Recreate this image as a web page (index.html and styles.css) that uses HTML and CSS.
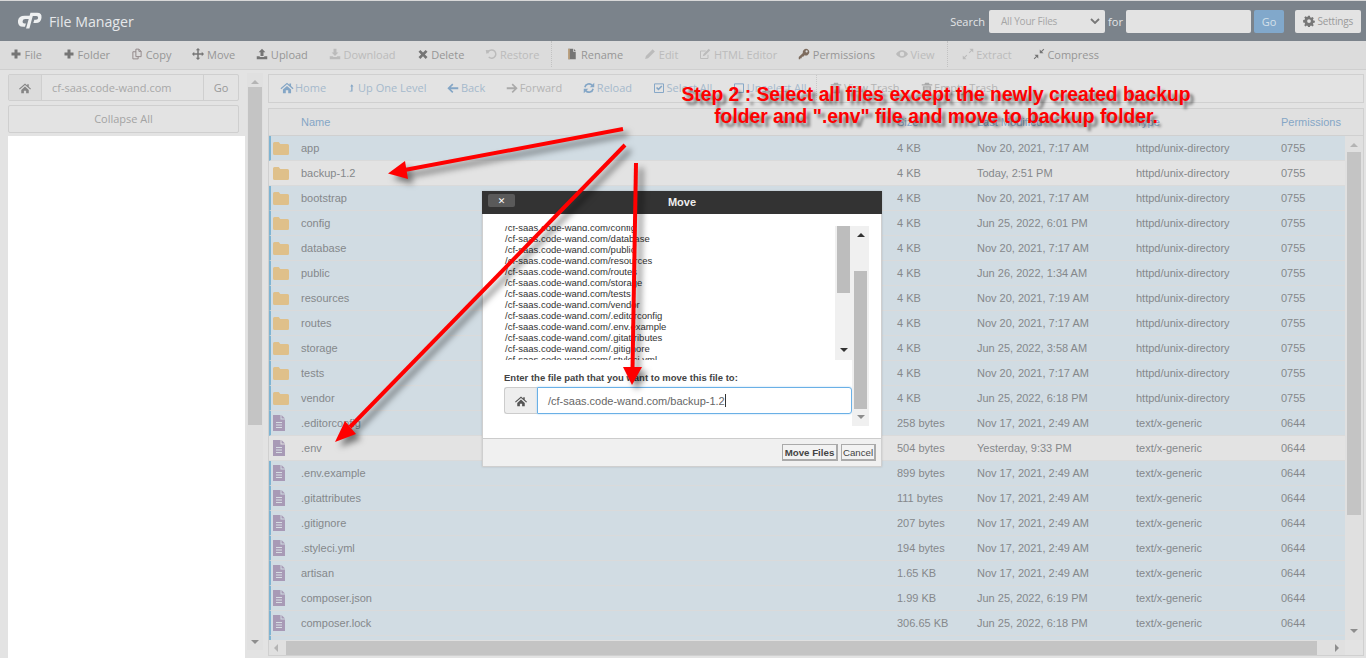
FILE: index.html
```html
<!DOCTYPE html>
<html lang="en">
<head>
<meta charset="utf-8">
<title>File Manager</title>
<link rel="stylesheet" href="styles.css">
</head>
<body>
<svg class="sprite" xmlns="http://www.w3.org/2000/svg">
  <symbol id="i-plus" viewBox="0 0 16 16"><path d="M6 2h4v4h4v4h-4v4H6v-4H2V6h4z"/></symbol>
  <symbol id="i-copy" viewBox="0 0 16 16"><path fill="none" stroke="currentColor" stroke-width="1.3" d="M6.5 1.5h4l3 3v7h-7zM10.5 1.5v3h3M6.5 5h-4v9.5h7v-3"/></symbol>
  <symbol id="i-move" viewBox="0 0 16 16"><path d="M8 0l3 3H9v4h4V5l3 3-3 3V9H9v4h2l-3 3-3-3h2V9H3v2L0 8l3-3v2h4V3H5z"/></symbol>
  <symbol id="i-upload" viewBox="0 0 16 16"><path d="M8 1l4.500 4.500H10v5H6v-5H3.500zM1 11h4v1h6v-1h4v4H1z"/></symbol>
  <symbol id="i-download" viewBox="0 0 16 16"><path d="M6 1h4v5h2.500L8 10.500 3.500 6H6zM1 11h4l1 1h4l1-1h4v4H1z"/></symbol>
  <symbol id="i-x" viewBox="0 0 16 16"><path d="M4.500 2.500L8 6l3.500-3.500 2.500 2.500L10.500 8.500 14 12l-2.500 2.500L8 11l-3.500 3.500L2 12l3.500-3.500L2 5z"/></symbol>
  <symbol id="i-undo" viewBox="0 0 16 16"><path fill="none" stroke="currentColor" stroke-width="2" d="M3.500 7a5.500 5.500 0 1 1 1.500 5"/><path d="M1 2.500l6 .5-5 5z"/></symbol>
  <symbol id="i-rename" viewBox="0 0 16 16"><path d="M3 1h6.500v4H13v10H3z"/><path fill="#c9a77c" d="M3 1h2v14H3z"/><path d="M10.500 1L13 4h-2.500z"/></symbol>
  <symbol id="i-pencil" viewBox="0 0 16 16"><path d="M11.500 1.500l3 3-9 9-4 1 1-4z"/></symbol>
  <symbol id="i-edit" viewBox="0 0 16 16"><path fill="none" stroke="currentColor" stroke-width="1.300" d="M12 9v5H2V4h7"/><path d="M13 1l2 2-7 7-3 1 1-3z"/></symbol>
  <symbol id="i-key" viewBox="0 0 16 16"><path d="M10.500 1a4.500 4.500 0 1 1-1.800 8.600L7 11.500H5V13.500H3V15H1v-3l5.500-5.500A4.500 4.500 0 0 1 10.500 1zM11.500 3a1.500 1.500 0 1 0 0 3 1.500 1.500 0 0 0 0-3z" fill-rule="evenodd"/></symbol>
  <symbol id="i-eye" viewBox="0 0 16 16"><path fill-rule="evenodd" d="M8 3c3.500 0 6.300 2.400 8 5-1.700 2.600-4.500 5-8 5s-6.300-2.400-8-5c1.700-2.600 4.500-5 8-5zM8 5a3 3 0 1 0 0 6 3 3 0 0 0 0-6z"/></symbol>
  <symbol id="i-expand" viewBox="0 0 16 16"><path d="M10 1h5v5l-2-2-3 3-1-1 3-3zM6 15H1v-5l2 2 3-3 1 1-3 3z"/></symbol>
  <symbol id="i-compress" viewBox="0 0 16 16"><path d="M9 7V2l2 2 3-3 1 1-3 3 2 2zM7 9v5l-2-2-3 3-1-1 3-3-2-2z"/></symbol>
  <symbol id="i-home" viewBox="0 0 16 16"><path d="M8 2l3 2.500V3h2v3.200L16 9l-1 1-7-6-7 6-1-1zM3 10.500L8 6l5 4.500V15H9.500v-3.500h-3V15H3z"/></symbol>
  <symbol id="i-up" viewBox="0 0 16 16"><path d="M9.500 0.500L13 5h-2v10H5v-1.500h3.500V5h-2z"/></symbol>
  <symbol id="i-back" viewBox="0 0 16 16"><path d="M7 2l1.500 1.500L5 7h10v2.500H5l3.500 3.500L7 14.500 0.500 8.200z"/></symbol>
  <symbol id="i-forward" viewBox="0 0 16 16"><path d="M9 2L7.500 3.500 11 7H1v2.500h10L7.500 13 9 14.500l6.500-6.300z"/></symbol>
  <symbol id="i-reload" viewBox="0 0 16 16"><path fill="none" stroke="currentColor" stroke-width="2.200" d="M2.500 7a5.600 5.600 0 0 1 9.800-2.500M13.500 9a5.600 5.600 0 0 1-9.800 2.500"/><path d="M15 1v6H9zM1 15V9h6z"/></symbol>
  <symbol id="i-check" viewBox="0 0 16 16"><path fill="none" stroke="currentColor" stroke-width="1.300" d="M2 2.500h12v11.500H2z"/><path d="M4 8l1.500-1.500L7.300 8.300 11 4.500 12.500 6 7.300 11.300z"/></symbol>
  <symbol id="i-square" viewBox="0 0 16 16"><path fill="none" stroke="currentColor" stroke-width="1.300" d="M2 2.500h12v11.500H2z"/></symbol>
  <symbol id="i-trash" viewBox="0 0 16 16"><path fill-rule="evenodd" d="M5.500 1h5l1 2H15v1.500H1V3h3.500zM2.500 5.500h11V15h-11zM5 7v6.500h1V7zM7.500 7v6.500h1V7zM10 7v6.500h1V7z"/></symbol>
  <symbol id="i-gear" viewBox="0 0 16 16"><path fill-rule="evenodd" d="M6.800 1h2.400l.4 2 1.300.6 1.800-1.100 1.600 1.700-1.100 1.700.6 1.400 2 .4v2.400l-2 .4-.6 1.300 1.100 1.800-1.700 1.600-1.700-1.100-1.400.6-.4 2H6.800l-.4-2-1.300-.6-1.800 1.100-1.600-1.700 1.100-1.700-.6-1.400-2-.4V6.700l2-.4.6-1.300-1.100-1.800 1.700-1.600 1.700 1.100 1.400-.6zM8 5.500a2.500 2.500 0 1 0 0 5 2.500 2.500 0 0 0 0-5z"/></symbol>
  <symbol id="i-folder" viewBox="0 0 16 13"><path d="M1.500 0h4.200l1.600 2h7.200q1.500 0 1.500 1.500v8q0 1.500-1.500 1.500h-13Q0 13 0 11.500v-10Q0 0 1.500 0z"/></symbol>
  <symbol id="i-doc" viewBox="0 0 12 16"><path d="M0 0h7.500v4.500H12V16H0z"/><path d="M8.500 0L12 3.500H8.500z"/><path fill="#d6dde3" d="M3 7h6v1H3zM3 9.500h6v1H3zM3 12h6v1H3z"/></symbol>
</svg>

<div class="app">
  <header class="topbar">
    <div class="brand">
      <svg class="logo" viewBox="0 0 26 18"><path fill="#eef0f1" d="M8 3.500h5.500L12.300 7H8.500q-2.400 0-2.700 2.200-.3 2.300 2 2.300h1.500l-1 3.500H6.500Q.4 15 1 8.700 1.700 3.500 8 3.500zM14 .5h7q5 0 4.500 5-.6 5.500-6 5.500H17l1-3.300h1.800q2 0 2.200-1.900.1-1.900-1.800-1.900h-3.800l-3.500 13h-3.500z"/></svg>
      <span class="brand-title">File Manager</span>
    </div>
    <form class="search">
      <span class="search-label">Search</span>
      <div class="select"><span>All Your Files</span><svg class="chev" viewBox="0 0 10 6"><path fill="none" stroke="currentColor" stroke-width="1.800" d="M1 1l4 4 4-4"/></svg></div>
      <span class="search-for">for</span>
      <div class="search-input"></div>
      <div class="go-btn">Go</div>
      <div class="settings-btn"><svg class="ico"><use href="#i-gear"/></svg>Settings</div>
    </form>
  </header>

  <nav class="toolbar">
    <span class="tool"><svg class="ico"><use href="#i-plus"/></svg>File</span>
    <span class="tool"><svg class="ico"><use href="#i-plus"/></svg>Folder</span>
    <span class="tool"><svg class="ico ico-copy"><use href="#i-copy"/></svg>Copy</span>
    <span class="tool"><svg class="ico"><use href="#i-move"/></svg>Move</span>
    <span class="tool"><svg class="ico"><use href="#i-upload"/></svg>Upload</span>
    <span class="tool off"><svg class="ico"><use href="#i-download"/></svg>Download</span>
    <span class="tool"><svg class="ico"><use href="#i-x"/></svg>Delete</span>
    <span class="tool off"><svg class="ico"><use href="#i-undo"/></svg>Restore</span>
    <span class="tool-sep"></span>
    <span class="tool"><svg class="ico"><use href="#i-rename"/></svg>Rename</span>
    <span class="tool off"><svg class="ico"><use href="#i-pencil"/></svg>Edit</span>
    <span class="tool off"><svg class="ico"><use href="#i-edit"/></svg>HTML Editor</span>
    <span class="tool"><svg class="ico ico-key"><use href="#i-key"/></svg>Permissions</span>
    <span class="tool off"><svg class="ico"><use href="#i-eye"/></svg>View</span>
    <span class="tool-sep"></span>
    <span class="tool off"><svg class="ico"><use href="#i-expand"/></svg>Extract</span>
    <span class="tool"><svg class="ico"><use href="#i-compress"/></svg>Compress</span>
  </nav>

  <div class="workspace">
    <aside class="side">
      <div class="path-group">
        <div class="path-home"><svg class="ico"><use href="#i-home"/></svg></div>
        <div class="path-val">cf-saas.code-wand.com</div>
        <div class="path-go">Go</div>
      </div>
      <div class="collapse-btn">Collapse All</div>
      <div class="tree"></div>
    </aside>

    <div class="vscroll side-scroll">
      <span class="arr arr-up"></span>
      <span class="thumb thumb-side"></span>
      <span class="vspace"></span>
      <span class="arr arr-down"></span>
    </div>

    <main class="panel">
      <div class="actions">
        <span class="act"><svg class="ico ico-home"><use href="#i-home"/></svg>Home</span>
        <span class="act"><svg class="ico ico-narrow"><use href="#i-up"/></svg>Up One Level</span>
        <span class="act"><svg class="ico"><use href="#i-back"/></svg>Back</span>
        <span class="act act-off"><svg class="ico"><use href="#i-forward"/></svg>Forward</span>
        <span class="act"><svg class="ico"><use href="#i-reload"/></svg>Reload</span>
        <span class="act"><svg class="ico"><use href="#i-check"/></svg>Select All</span>
        <span class="act"><svg class="ico"><use href="#i-square"/></svg>Unselect All</span>
        <span class="act-sep"></span>
        <span class="act act-off"><svg class="ico"><use href="#i-trash"/></svg>View Trash</span>
        <span class="act act-off"><svg class="ico"><use href="#i-trash"/></svg>Empty Trash</span>
      </div>

      <div class="table">
        <div class="row head"><span></span><span>Name</span><span>Size</span><span>Last Modified</span><span>Type</span><span>Permissions</span></div>
        <div class="table-mid">
          <div class="rows">
            <div class="row sel"><svg class="folder"><use href="#i-folder"/></svg><span>app</span><span>4 KB</span><span>Nov 20, 2021, 7:17 AM</span><span>httpd/unix-directory</span><span>0755</span></div>
            <div class="row"><svg class="folder"><use href="#i-folder"/></svg><span>backup-1.2</span><span>4 KB</span><span>Today, 2:51 PM</span><span>httpd/unix-directory</span><span>0755</span></div>
            <div class="row sel"><svg class="folder"><use href="#i-folder"/></svg><span>bootstrap</span><span>4 KB</span><span>Nov 20, 2021, 7:17 AM</span><span>httpd/unix-directory</span><span>0755</span></div>
            <div class="row sel"><svg class="folder"><use href="#i-folder"/></svg><span>config</span><span>4 KB</span><span>Jun 25, 2022, 6:01 PM</span><span>httpd/unix-directory</span><span>0755</span></div>
            <div class="row sel"><svg class="folder"><use href="#i-folder"/></svg><span>database</span><span>4 KB</span><span>Nov 20, 2021, 7:17 AM</span><span>httpd/unix-directory</span><span>0755</span></div>
            <div class="row sel"><svg class="folder"><use href="#i-folder"/></svg><span>public</span><span>4 KB</span><span>Jun 26, 2022, 1:34 AM</span><span>httpd/unix-directory</span><span>0755</span></div>
            <div class="row sel"><svg class="folder"><use href="#i-folder"/></svg><span>resources</span><span>4 KB</span><span>Nov 20, 2021, 7:19 AM</span><span>httpd/unix-directory</span><span>0755</span></div>
            <div class="row sel"><svg class="folder"><use href="#i-folder"/></svg><span>routes</span><span>4 KB</span><span>Nov 20, 2021, 7:17 AM</span><span>httpd/unix-directory</span><span>0755</span></div>
            <div class="row sel"><svg class="folder"><use href="#i-folder"/></svg><span>storage</span><span>4 KB</span><span>Jun 25, 2022, 3:58 AM</span><span>httpd/unix-directory</span><span>0755</span></div>
            <div class="row sel"><svg class="folder"><use href="#i-folder"/></svg><span>tests</span><span>4 KB</span><span>Nov 20, 2021, 7:17 AM</span><span>httpd/unix-directory</span><span>0755</span></div>
            <div class="row sel"><svg class="folder"><use href="#i-folder"/></svg><span>vendor</span><span>4 KB</span><span>Jun 25, 2022, 6:18 PM</span><span>httpd/unix-directory</span><span>0755</span></div>
            <div class="row sel"><svg class="doc"><use href="#i-doc"/></svg><span>.editorconfig</span><span>258 bytes</span><span>Nov 17, 2021, 2:49 AM</span><span>text/x-generic</span><span>0644</span></div>
            <div class="row"><svg class="doc"><use href="#i-doc"/></svg><span>.env</span><span>504 bytes</span><span>Yesterday, 9:33 PM</span><span>text/x-generic</span><span>0644</span></div>
            <div class="row sel"><svg class="doc"><use href="#i-doc"/></svg><span>.env.example</span><span>899 bytes</span><span>Nov 17, 2021, 2:49 AM</span><span>text/x-generic</span><span>0644</span></div>
            <div class="row sel"><svg class="doc"><use href="#i-doc"/></svg><span>.gitattributes</span><span>111 bytes</span><span>Nov 17, 2021, 2:49 AM</span><span>text/x-generic</span><span>0644</span></div>
            <div class="row sel"><svg class="doc"><use href="#i-doc"/></svg><span>.gitignore</span><span>207 bytes</span><span>Nov 17, 2021, 2:49 AM</span><span>text/x-generic</span><span>0644</span></div>
            <div class="row sel"><svg class="doc"><use href="#i-doc"/></svg><span>.styleci.yml</span><span>194 bytes</span><span>Nov 17, 2021, 2:49 AM</span><span>text/x-generic</span><span>0644</span></div>
            <div class="row sel"><svg class="doc"><use href="#i-doc"/></svg><span>artisan</span><span>1.65 KB</span><span>Nov 17, 2021, 2:49 AM</span><span>text/x-generic</span><span>0644</span></div>
            <div class="row sel"><svg class="doc"><use href="#i-doc"/></svg><span>composer.json</span><span>1.99 KB</span><span>Jun 25, 2022, 6:19 PM</span><span>text/x-generic</span><span>0644</span></div>
            <div class="row sel"><svg class="doc"><use href="#i-doc"/></svg><span>composer.lock</span><span>306.65 KB</span><span>Jun 25, 2022, 6:18 PM</span><span>text/x-generic</span><span>0644</span></div>
            <div class="row sel"></div>
          </div>
          <div class="vscroll table-scroll">
            <span class="arr arr-up"></span>
            <span class="thumb thumb-table"></span>
            <span class="vspace"></span>
            <span class="arr arr-down"></span>
          </div>
        </div>
        <div class="hscroll">
          <span class="arr arr-left"></span>
          <span class="thumb thumb-h"></span>
          <span class="hspace"></span>
          <span class="arr arr-right"></span>
        </div>
      </div>
    </main>
  </div>

  <section class="modal">
    <div class="modal-head">
      <span class="modal-x">✕</span>
      <span class="modal-title">Move</span>
    </div>
    <div class="modal-body">
      <div class="modal-left">
        <div class="file-box">
          <div class="file-list">
            <div>/cf-saas.code-wand.com/config</div>
            <div>/cf-saas.code-wand.com/database</div>
            <div>/cf-saas.code-wand.com/public</div>
            <div>/cf-saas.code-wand.com/resources</div>
            <div>/cf-saas.code-wand.com/routes</div>
            <div>/cf-saas.code-wand.com/storage</div>
            <div>/cf-saas.code-wand.com/tests</div>
            <div>/cf-saas.code-wand.com/vendor</div>
            <div>/cf-saas.code-wand.com/.editorconfig</div>
            <div>/cf-saas.code-wand.com/.env.example</div>
            <div>/cf-saas.code-wand.com/.gitattributes</div>
            <div>/cf-saas.code-wand.com/.gitignore</div>
            <div>/cf-saas.code-wand.com/.styleci.yml</div>
          </div>
          <div class="vscroll list-scroll">
            <span class="thumb thumb-list"></span>
            <span class="vspace"></span>
            <span class="arr arr-down dark"></span>
          </div>
        </div>
        <label class="dest-label">Enter the file path that you want to move this file to:</label>
        <div class="dest">
          <div class="dest-home"><svg class="ico"><use href="#i-home"/></svg></div>
          <div class="dest-input"><span>/cf-saas.code-wand.com/backup-1.2</span><i class="caret"></i></div>
        </div>
      </div>
      <div class="vscroll modal-scroll">
        <span class="arr arr-up dark"></span>
        <span class="thumb thumb-modal"></span>
        <span class="vspace"></span>
        <span class="arr arr-down"></span>
      </div>
    </div>
    <div class="modal-foot">
      <span class="btn btn-move">Move Files</span>
      <span class="btn btn-cancel">Cancel</span>
    </div>
  </section>

  <svg class="arrows" viewBox="0 0 1366 658">
    <path d="M623 129L402 170.500" stroke="#f00" stroke-width="4" fill="none"/>
    <path d="M388 173.500L405 161l3 18z"/>
    <path d="M625 145L350 427" stroke="#f00" stroke-width="4" fill="none"/>
    <path d="M335 442L345 421l11 13z"/>
    <path d="M636 163L632.500 370" stroke="#f00" stroke-width="4" fill="none"/>
    <path d="M632 385L623 367h19z"/>
  </svg>

  <p class="note">Step 2 : Select all files except the newly created backup<br>folder and ".env" file and move to backup folder.</p>
</div>
</body>
</html>
```

FILE: styles.css
```css
* { box-sizing: border-box; }
html, body { margin: 0; height: 100%; overflow: hidden; }
body { font-family: "Open Sans", "Liberation Sans", sans-serif; font-size: 11px; color: #8a8a8a; background: #e3e3e3; }
.sprite { display: none; }
.app { position: relative; width: 1366px; height: 658px; overflow: hidden; background: #e3e3e3; border-top: 1px solid #d8d8d8; }
.ico { width: 12px; height: 12px; fill: currentColor; flex: none; margin-right: 2.600px; }

.topbar { height: 40px; background: #7b838b; display: flex; justify-content: space-between; align-items: center; padding: 0 5px 0 17px; }
.brand { display: flex; align-items: center; }
.logo { width: 25px; height: 18px; margin-right: 7px; }
.brand-title { font-size: 14.200px; color: #e6e8ea; }
.search { display: flex; align-items: center; margin: 0; color: #e3e5e7; font-size: 11px; }
.search-label { margin-right: 4px; }
.select { width: 116px; height: 23px; background: #e3e3e3; border-radius: 2px; display: flex; align-items: center; justify-content: space-between; padding: 0 5px 0 12px; color: #a6a6a6; font-size: 10px; letter-spacing: -.2px; }
.chev { width: 10px; height: 6px; color: #777; }
.search-for { width: 21px; text-align: center; }
.search-input { width: 125px; height: 23px; background: #e3e3e3; border-radius: 2px; }
.go-btn { width: 30px; height: 23px; margin-left: 3px; background: #81a8cb; color: #d5e0ea; border-radius: 2px; display: flex; align-items: center; justify-content: center; }
.settings-btn { width: 66px; height: 23px; margin-left: 11px; background: #e3e3e3; color: #9a9a9a; border-radius: 2px; display: flex; align-items: center; justify-content: center; font-size: 10px; letter-spacing: -.2px; }
.settings-btn .ico { color: #777; }

.toolbar { height: 29px; background: #dcdcdc; border-bottom: 1px solid #cfcfcf; display: flex; align-items: center; padding: 0 0 2px 10px; gap: 21px; font-size: 11px; color: #969696; }
.tool { display: inline-flex; align-items: center; white-space: nowrap; }
.tool .ico { color: #757575; }
.tool .ico-copy { color: #93898a; }
.tool .ico-key { color: #7d6b5d; }
.tool.off { color: #bbb; }
.tool.off .ico { color: #bbb; }
.tool-sep { align-self: stretch; border-left: 1px dotted #c2c2c2; margin: 0 -7px 0 -9px; }

.workspace { display: flex; height: 588px; }
.side { width: 245px; padding: 4px 0 0 8px; display: flex; flex-direction: column; flex: none; }
.path-group { width: 231px; height: 27px; display: flex; border: 1px solid #cfcfcf; border-radius: 2px; flex: none; }
.path-home { width: 33px; background: #dcdcdc; border-right: 1px solid #cfcfcf; display: flex; align-items: center; justify-content: center; color: #858585; }
.path-home .ico { margin: 0; }
.path-val { flex: 1; padding-left: 10px; display: flex; align-items: center; color: #a8a8a8; }
.path-go { width: 35px; border-left: 1px solid #cfcfcf; display: flex; align-items: center; justify-content: center; color: #999; }
.collapse-btn { width: 231px; height: 28px; margin-top: 4px; padding-bottom: 1px; border: 1px solid #cfcfcf; border-radius: 2px; display: flex; align-items: center; justify-content: center; color: #a3a3a3; flex: none; }
.tree { margin-top: 3px; flex: 1; background: #fff; }

.vscroll { display: flex; flex-direction: column; align-items: center; flex: none; }
.vspace, .hspace { flex: 1; }
.thumb { background: #c4c4c4; display: block; }
.arr { width: 0; height: 0; display: block; border-style: solid; border-color: transparent; flex: none; }
.arr-up { border-width: 0 4px 4px; border-bottom-color: #b4b4b4; }
.arr-down { border-width: 4px 4px 0; border-top-color: #8d8d8d; }
.arr-left { border-width: 4px 4px 4px 0; border-right-color: #b4b4b4; }
.arr-right { border-width: 4px 0 4px 4px; border-left-color: #8d8d8d; }
.arr.dark.arr-up { border-bottom-color: #333; }
.arr.dark.arr-down { border-top-color: #333; }

.side-scroll { width: 16px; margin: 3px 0 8px 2px; padding: 7px 1px 6px; background: #e0e0e0; }
.thumb-side { width: 14px; height: 338px; margin-top: 3px; }

.panel { width: 1096px; margin: 4px 0 0 5px; display: flex; flex-direction: column; flex: none; }
.actions { height: 29px; border: 1px solid #d0d0d0; display: flex; align-items: center; padding: 0 0 2px 11px; gap: 21px; color: #a5b9cc; font-size: 11px; flex: none; }
.act { display: inline-flex; align-items: center; white-space: nowrap; }
.act .ico { color: #84a6c6; margin-right: 1.500px; }
.act .ico-home { width: 14px; height: 13px; margin-right: 1px; }
.act .ico-narrow { width: 8px; margin-right: 3px; }
.act-off { color: #b4b4b4; }
.act-off .ico { color: #aaa; }
.act-sep { align-self: stretch; border-left: 1px dotted #c8c8c8; margin: 0 -8px 0 -11px; }

.table { margin-top: 5px; height: 548px; border: 1px solid #d0d0d0; display: flex; flex-direction: column; overflow: hidden; flex: none; }
.row { display: grid; grid-template-columns: 32px 596px 80px 159px 145px 64px; align-items: center; height: 25px; width: 1076px; border-bottom: 1px solid #dadada; font-family: "Liberation Sans", Arial, sans-serif; font-size: 11px; color: #85888b; white-space: nowrap; flex: none; }
.head { height: 27px; width: 100%; color: #85a6c6; background: #e0e0e0; border-bottom: 1px solid #d0d0d0; grid-template-columns: 32px 596px 80px 159px 145px 1fr; }
.table-mid { display: flex; height: 504px; flex: none; }
.rows { width: 1076px; height: 504px; overflow: hidden; flex: none; }
.sel { background: #d1dce3; border-left: 2px solid #7fb4d2; grid-template-columns: 30px 596px 80px 159px 145px 64px; }
.folder { width: 16px; height: 13px; margin-left: 4px; fill: #dfc08a; }
.sel .folder { margin-left: 2px; }
.doc { width: 12px; height: 16px; margin-left: 4px; fill: #a89ab6; }
.sel .doc { margin-left: 2px; }

.table-scroll { width: 19px; padding: 7px 3px 7px 2px; background: #e0e0e0; }
.thumb-table { width: 14px; height: 363px; margin-top: 5px; }
.hscroll { height: 15px; display: flex; align-items: center; background: #e0e0e0; width: 1076px; padding: 0 6px 0 5px; }
.thumb-h { height: 14px; width: 1031px; margin-left: 8px; }

.modal { position: absolute; left: 482px; top: 190px; width: 400px; height: 276px; background: #fff; border: 1px solid #cfcfcf; border-top: 0; display: flex; flex-direction: column; box-shadow: 0 0 2px rgba(0, 0, 0, .15); }
.modal-head { height: 23px; padding-bottom: 2px; background: #333; position: relative; display: flex; align-items: center; justify-content: center; flex: none; margin: 0 -1px; }
.modal-x { position: absolute; left: 6px; top: 3px; width: 27px; height: 13px; background: #5a5a5a; border-radius: 2px; color: #fff; font-size: 9px; font-weight: bold; display: flex; align-items: center; justify-content: center; font-family: "DejaVu Sans", sans-serif; }
.modal-title { color: #eee; font: bold 11px "Liberation Sans", Arial, sans-serif; }
.modal-body { flex: 1; display: flex; padding: 12px 12px 0 21px; font-family: "Liberation Sans", Arial, sans-serif; align-items: flex-start; }
.modal-left { width: 348px; flex: none; }
.file-box { display: flex; height: 134px; }
.file-list { flex: 1; height: 134px; overflow: hidden; font-size: 9.500px; line-height: 11px; color: #333; padding-left: 1px; }
.file-list > div:first-child { margin-top: -4px; }
.list-scroll { width: 17px; height: 134px; background: #f0f0f0; padding: 0 2px 8px; }
.thumb-list { width: 13px; height: 67px; background: #bdbdbd; }
.dest-label { display: block; margin-top: 12px; font-size: 9.500px; font-weight: bold; color: #444; line-height: 12px; }
.dest { margin-top: 3px; height: 27px; display: flex; }
.dest-home { width: 33px; background: #eee; border: 1px solid #ccc; border-right: 0; border-radius: 3px 0 0 3px; display: flex; align-items: center; justify-content: center; color: #555; }
.dest-home .ico { margin: 0; }
.dest-input { flex: 1; border: 1px solid #6ab0e6; border-radius: 0 3px 3px 0; display: flex; align-items: center; padding-left: 10px; font-size: 11px; color: #666; box-shadow: 0 0 2px #a8d2f2; }
.caret { width: 1px; height: 13px; background: #333; }
.modal-scroll { width: 17px; height: 200px; background: #f0f0f0; padding: 7px 2px 7px; }
.thumb-modal { width: 13px; height: 138px; margin-top: 34px; background: #bdbdbd; }
.modal-foot { height: 28px; background: #f0f0f0; border-top: 1px solid #ccc; display: flex; align-items: center; justify-content: flex-end; gap: 3px; padding-right: 5px; flex: none; font-family: "Liberation Sans", Arial, sans-serif; }
.btn { height: 17px; display: flex; align-items: center; justify-content: center; background: #f2f2f2; border: 1px solid #aaa; border-width: 1px 2px 2px 1px; color: #444; font-size: 9.700px; }
.btn-move { width: 56px; font-weight: bold; }
.btn-cancel { width: 35px; }

.arrows { position: absolute; left: 0; top: -1px; width: 1366px; height: 658px; fill: #f00; filter: drop-shadow(5px 5px 3px rgba(0, 0, 0, .5)); pointer-events: none; }
.note { position: absolute; left: 681px; top: 83px; width: 510px; margin: 0; text-align: center; font: bold 19.300px/22px "Liberation Sans", Arial, sans-serif; color: #f00; text-shadow: 4px 4px 3px rgba(0, 0, 0, .45); white-space: nowrap; }
```
